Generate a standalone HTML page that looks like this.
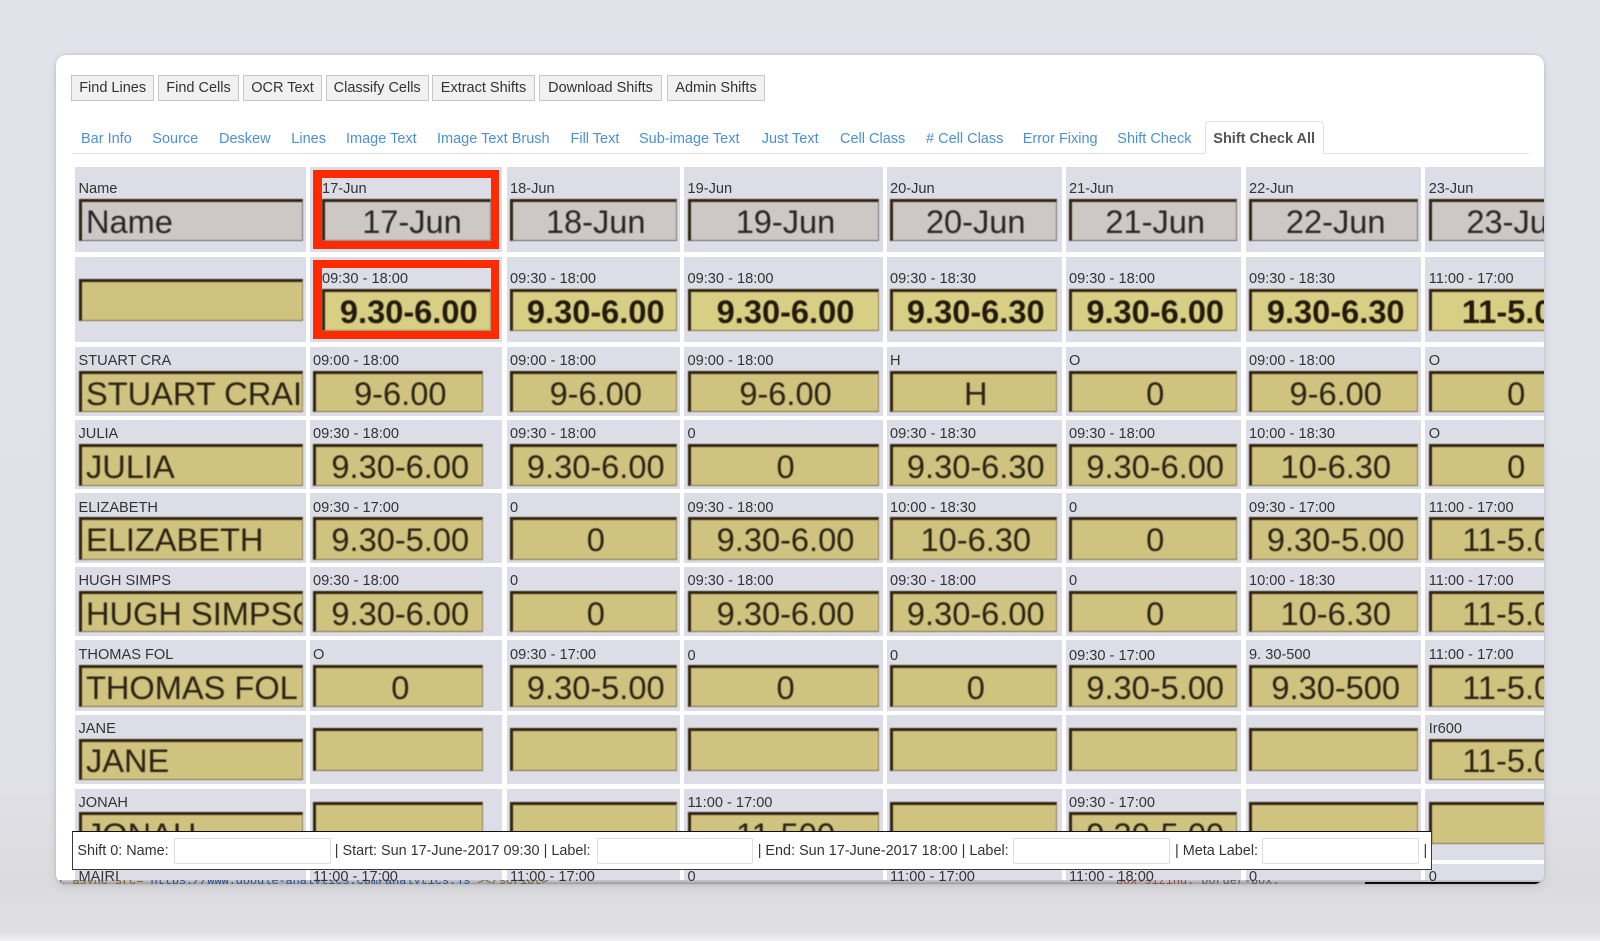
<!DOCTYPE html>
<html><head><meta charset="utf-8"><title>Shift Check All</title>
<style>
html,body{margin:0;padding:0;width:1600px;height:941px;overflow:hidden}
body{background:linear-gradient(#e2e3ea 0,#e1e2e9 80%,#dcdbdf 94%,#dfdfe3 99%,#f2f2f4 100%);font-family:"Liberation Sans",sans-serif;font-size:14.6px;color:#333;position:relative}
#card{position:absolute;left:56px;top:55px;width:1488px;height:829px;border-radius:10px;overflow:hidden;background:#fff;box-shadow:0 0 3px rgba(60,60,80,.22),0 4px 10px rgba(60,60,70,.1)}
#in{position:absolute;left:-56px;top:-55px;width:1600px;height:941px}
.col{position:absolute;top:0;height:884px;background:linear-gradient(#dddde8,#dddde8) 0 167px no-repeat}
.gap{position:absolute;left:70px;width:1480px;background:#fff}
.l{position:absolute;height:16px;line-height:16px;white-space:nowrap;color:#333}
.m{position:absolute;box-sizing:border-box;overflow:hidden;white-space:nowrap;text-align:center;font-size:32.6px;line-height:40px;color:#2c2314;padding-left:2.5px;background:#cfc37f;border:solid #33250f;border-width:3px 1px 1px 3px;border-right-color:#8f8054;border-bottom-color:#7f6f48;filter:blur(.5px)}
.n{text-align:left;padding-left:4.5px}
.g{background:#cdc8c5;color:#2a2524;border-right-color:#7a7470;border-bottom-color:#6a6460}
.y{background:#d8ce84;font-weight:bold;color:#231a0c}
.c0{--x:3.5px;--w:224.3px}.c1{--x:3px;--w:170px}.c2{--x:3.5px;--w:167px}.c3{--x:3.5px;--w:191.5px}.c4{--x:3px;--w:167px}.c5{--x:3.3px;--w:168px}.c6{--x:3.3px;--w:169px}.c7{--x:3.4px;--w:170.6px}
.l,.m{left:var(--x)}.m{width:var(--w)}
.t0{top:181px}.t1{top:271px}.t2{top:353px}.t3{top:426px}.t4{top:500px}.t5{top:573px}.t6{top:647px}.t7{top:721px}.t8{top:795px}.t9{top:869px}
.h0{top:199px;height:42px}.h1{top:289px;height:42px}.h2{top:371px;height:41px}.h3{top:444px;height:42px}.h4{top:517px;height:43px}.h5{top:591px;height:41px}.h6{top:665px;height:42px}.h7{top:728px;height:43px}.h7b{top:739px;height:41px;line-height:38px}.h8{top:802px;height:42px}.h8b{top:812px;height:42px}
.btn{position:absolute;top:74.5px;height:26px;box-sizing:border-box;border:1.5px solid #c6c6ca;background:#f1f1f1;text-align:center;line-height:25px;color:#333;white-space:nowrap;font-size:14.5px}
.tab{position:absolute;top:129px;height:20px;line-height:20px;color:#4a90d2;white-space:nowrap;font-size:14.5px}
#line{position:absolute;left:71.7px;width:1457.3px;top:153px;height:1px;background:#dfdfe2}
#act{position:absolute;left:1204.7px;top:121px;width:119px;height:33px;box-sizing:border-box;border:1px solid #dfdfe2;border-bottom:1px solid #fff;border-radius:4px 4px 0 0;background:#fff;color:#555;font-weight:bold;text-align:center;line-height:34px;white-space:nowrap;font-size:14.5px}
.red{position:absolute;left:313px;width:186.3px;height:79px;box-sizing:border-box;border:solid #ff2a00;border-width:8px 8.3px 8px 9px}
#bar{position:absolute;left:71.7px;top:831px;width:1360.5px;height:39px;box-sizing:border-box;background:#fff;border:solid #3a3a3a;border-width:1.5px 1px 1.5px 1px;border-top-color:#111;z-index:5}
.bt{position:absolute;top:851px;margin-top:-8px;height:16px;line-height:16px;white-space:nowrap;color:#333;z-index:6;font-size:14.42px}
.ip{position:absolute;top:837.5px;height:26.5px;box-sizing:border-box;background:#fff;border:1px solid #ddd;border-radius:2px;z-index:6}
#strip{position:absolute;left:56px;top:880px;width:1488px;height:5px;overflow:hidden;background:linear-gradient(#c9c8ca,#b0afb1 50%,#8a8a8c);z-index:1}
#strip span{font-family:"Liberation Mono",monospace;font-size:11.85px;white-space:pre}
#strip>span{position:absolute;top:-5px;line-height:12px}
#blk{position:absolute;left:1309px;top:1.5px;width:179px;height:4px;background:#0a0a0a}
</style></head><body>
<div id="card"><div id="in">

<div class="col c0" style="left:75px;width:231px">
<div class="l t0">Name</div><div class="m n g h0">Name</div>
<div class="m" style="top:279px;height:42px"></div>
<div class="l t2">STUART CRA</div><div class="m n h2">STUART CRAIG</div>
<div class="l t3">JULIA</div><div class="m n h3">JULIA</div>
<div class="l t4">ELIZABETH</div><div class="m n h4">ELIZABETH</div>
<div class="l t5">HUGH SIMPS</div><div class="m n h5">HUGH SIMPSON</div>
<div class="l t6">THOMAS FOL</div><div class="m n h6">THOMAS FOL</div>
<div class="l t7">JANE</div><div class="m n h7b">JANE</div>
<div class="l t8">JONAH</div><div class="m n h8b">JONAH</div>
</div>

<div class="col c1" style="left:310px;width:192px">
<div class="l t0" style="left:12px">17-Jun</div><div class="m g h0" style="left:12px;width:169px;padding-left:9px">17-Jun</div>
<div class="l t1" style="left:12px">09:30 - 18:00</div><div class="m y h1" style="left:12px;width:169px">9.30-6.00</div>
<div class="l t2">09:00 - 18:00</div><div class="m h2">9-6.00</div>
<div class="l t3">09:30 - 18:00</div><div class="m h3">9.30-6.00</div>
<div class="l t4">09:30 - 17:00</div><div class="m h4">9.30-5.00</div>
<div class="l t5">09:30 - 18:00</div><div class="m h5">9.30-6.00</div>
<div class="l t6">O</div><div class="m h6">0</div>
<div class="m h7"></div>
<div class="m h8"></div>
</div>

<div class="col c2" style="left:506.5px;width:173.5px">
<div class="l t0">18-Jun</div><div class="m g h0">18-Jun</div>
<div class="l t1">09:30 - 18:00</div><div class="m y h1">9.30-6.00</div>
<div class="l t2">09:00 - 18:00</div><div class="m h2">9-6.00</div>
<div class="l t3">09:30 - 18:00</div><div class="m h3">9.30-6.00</div>
<div class="l t4">0</div><div class="m h4">0</div>
<div class="l t5">0</div><div class="m h5">0</div>
<div class="l t6">09:30 - 17:00</div><div class="m h6">9.30-5.00</div>
<div class="m h7"></div>
<div class="m h8"></div>
</div>

<div class="col c3" style="left:684px;width:199px">
<div class="l t0">19-Jun</div><div class="m g h0">19-Jun</div>
<div class="l t1">09:30 - 18:00</div><div class="m y h1">9.30-6.00</div>
<div class="l t2">09:00 - 18:00</div><div class="m h2">9-6.00</div>
<div class="l t3">0</div><div class="m h3">0</div>
<div class="l t4">09:30 - 18:00</div><div class="m h4">9.30-6.00</div>
<div class="l t5">09:30 - 18:00</div><div class="m h5">9.30-6.00</div>
<div class="l t6" style="margin-top:1px">0</div><div class="m h6">0</div>
<div class="m h7"></div>
<div class="l t8">11:00 - 17:00</div><div class="m h8b">11-500</div>
</div>

<div class="col c4" style="left:887px;width:174.6px">
<div class="l t0">20-Jun</div><div class="m g h0">20-Jun</div>
<div class="l t1">09:30 - 18:30</div><div class="m y h1">9.30-6.30</div>
<div class="l t2">H</div><div class="m h2">H</div>
<div class="l t3">09:30 - 18:30</div><div class="m h3">9.30-6.30</div>
<div class="l t4">10:00 - 18:30</div><div class="m h4">10-6.30</div>
<div class="l t5">09:30 - 18:00</div><div class="m h5">9.30-6.00</div>
<div class="l t6" style="margin-top:1px">0</div><div class="m h6">0</div>
<div class="m h7"></div>
<div class="m h8"></div>
</div>

<div class="col c5" style="left:1065.7px;width:175.6px">
<div class="l t0">21-Jun</div><div class="m g h0">21-Jun</div>
<div class="l t1">09:30 - 18:00</div><div class="m y h1">9.30-6.00</div>
<div class="l t2">O</div><div class="m h2">0</div>
<div class="l t3">09:30 - 18:00</div><div class="m h3">9.30-6.00</div>
<div class="l t4">0</div><div class="m h4">0</div>
<div class="l t5">0</div><div class="m h5">0</div>
<div class="l t6" style="margin-top:1px">09:30 - 17:00</div><div class="m h6">9.30-5.00</div>
<div class="m h7"></div>
<div class="l t8">09:30 - 17:00</div><div class="m h8b">9.30-5.00</div>
</div>

<div class="col c6" style="left:1245.7px;width:175.3px">
<div class="l t0">22-Jun</div><div class="m g h0">22-Jun</div>
<div class="l t1">09:30 - 18:30</div><div class="m y h1">9.30-6.30</div>
<div class="l t2">09:00 - 18:00</div><div class="m h2">9-6.00</div>
<div class="l t3">10:00 - 18:30</div><div class="m h3">10-6.30</div>
<div class="l t4">09:30 - 17:00</div><div class="m h4">9.30-5.00</div>
<div class="l t5">10:00 - 18:30</div><div class="m h5">10-6.30</div>
<div class="l t6">9. 30-500</div><div class="m h6">9.30-500</div>
<div class="m h7"></div>
<div class="m h8"></div>
</div>

<div class="col c7" style="left:1425.3px;width:125px">
<div class="l t0">23-Jun</div><div class="m g h0">23-Jun</div>
<div class="l t1">11:00 - 17:00</div><div class="m y h1">11-5.00</div>
<div class="l t2">O</div><div class="m h2">0</div>
<div class="l t3">O</div><div class="m h3">0</div>
<div class="l t4">11:00 - 17:00</div><div class="m h4">11-5.00</div>
<div class="l t5">11:00 - 17:00</div><div class="m h5">11-5.00</div>
<div class="l t6">11:00 - 17:00</div><div class="m h6">11-5.00</div>
<div class="l t7">Ir600</div><div class="m h7b">11-5.00</div>
<div class="m h8"></div>
</div>

<div class="gap" style="top:252px;height:4.5px"></div>
<div class="gap" style="top:342px;height:4.5px"></div>
<div class="gap" style="top:416px;height:4px"></div>
<div class="gap" style="top:489px;height:4px"></div>
<div class="gap" style="top:563px;height:4px"></div>
<div class="gap" style="top:636px;height:4px"></div>
<div class="gap" style="top:710.5px;height:4.5px"></div>
<div class="gap" style="top:784px;height:4.5px"></div>
<div class="gap" style="top:860px;height:3.5px"></div>

<div class="red" style="top:170px"></div>
<div class="red" style="top:260px"></div>

<div class="btn" style="left:71.3px;width:82.7px">Find Lines</div>
<div class="btn" style="left:158px;width:81px">Find Cells</div>
<div class="btn" style="left:243px;width:79px">OCR Text</div>
<div class="btn" style="left:325.7px;width:103px">Classify Cells</div>
<div class="btn" style="left:432px;width:103px">Extract Shifts</div>
<div class="btn" style="left:539px;width:123px">Download Shifts</div>
<div class="btn" style="left:667px;width:98px">Admin Shifts</div>

<div id="line"></div>
<div class="tab" style="left:81px">Bar Info</div>
<div class="tab" style="left:152.3px">Source</div>
<div class="tab" style="left:219px">Deskew</div>
<div class="tab" style="left:291.3px">Lines</div>
<div class="tab" style="left:346px">Image Text</div>
<div class="tab" style="left:437px">Image Text Brush</div>
<div class="tab" style="left:570.5px">Fill Text</div>
<div class="tab" style="left:639px">Sub-image Text</div>
<div class="tab" style="left:761.7px">Just Text</div>
<div class="tab" style="left:840px">Cell Class</div>
<div class="tab" style="left:926px"># Cell Class</div>
<div class="tab" style="left:1022.7px">Error Fixing</div>
<div class="tab" style="left:1117.3px">Shift Check</div>
<div id="act">Shift Check All</div>

<div id="strip"><span style="left:-5px;color:#6a5a30">ut <span style="color:#7a5a20">async src=</span><span style="color:#23508f">"https://www.google-analytics.com/analytics.js"</span>&gt;&lt;/script&gt;</span><span style="left:1060px;color:#8a4a3a">box-sizing: <span style="color:#555">border-box;</span></span><div id="blk"></div></div>

<div class="l" style="left:78.5px;top:869px;z-index:3">MAIRI</div>
<div class="l" style="left:313px;top:869px;z-index:3">11:00 - 17:00</div>
<div class="l" style="left:510px;top:869px;z-index:3">11:00 - 17:00</div>
<div class="l" style="left:687.5px;top:869px;z-index:3">0</div>
<div class="l" style="left:890px;top:869px;z-index:3">11:00 - 17:00</div>
<div class="l" style="left:1069px;top:869px;z-index:3">11:00 - 18:00</div>
<div class="l" style="left:1249px;top:869px;z-index:3">0</div>
<div class="l" style="left:1428.7px;top:869px;z-index:3">0</div>

<div id="bar"></div>
<div class="bt" style="left:77.4px">Shift 0: Name:</div>
<div class="ip" style="left:174px;width:156.6px"></div>
<div class="bt" style="left:334.8px">| Start: Sun 17-June-2017 09:30 | Label:</div>
<div class="ip" style="left:597px;width:155.6px"></div>
<div class="bt" style="left:757.7px">| End: Sun 17-June-2017 18:00 | Label:</div>
<div class="ip" style="left:1013px;width:157px"></div>
<div class="bt" style="left:1175px">| Meta Label:</div>
<div class="ip" style="left:1262px;width:157px"></div>
<div class="bt" style="left:1423.5px">|</div>

</div></div>
</body></html>
